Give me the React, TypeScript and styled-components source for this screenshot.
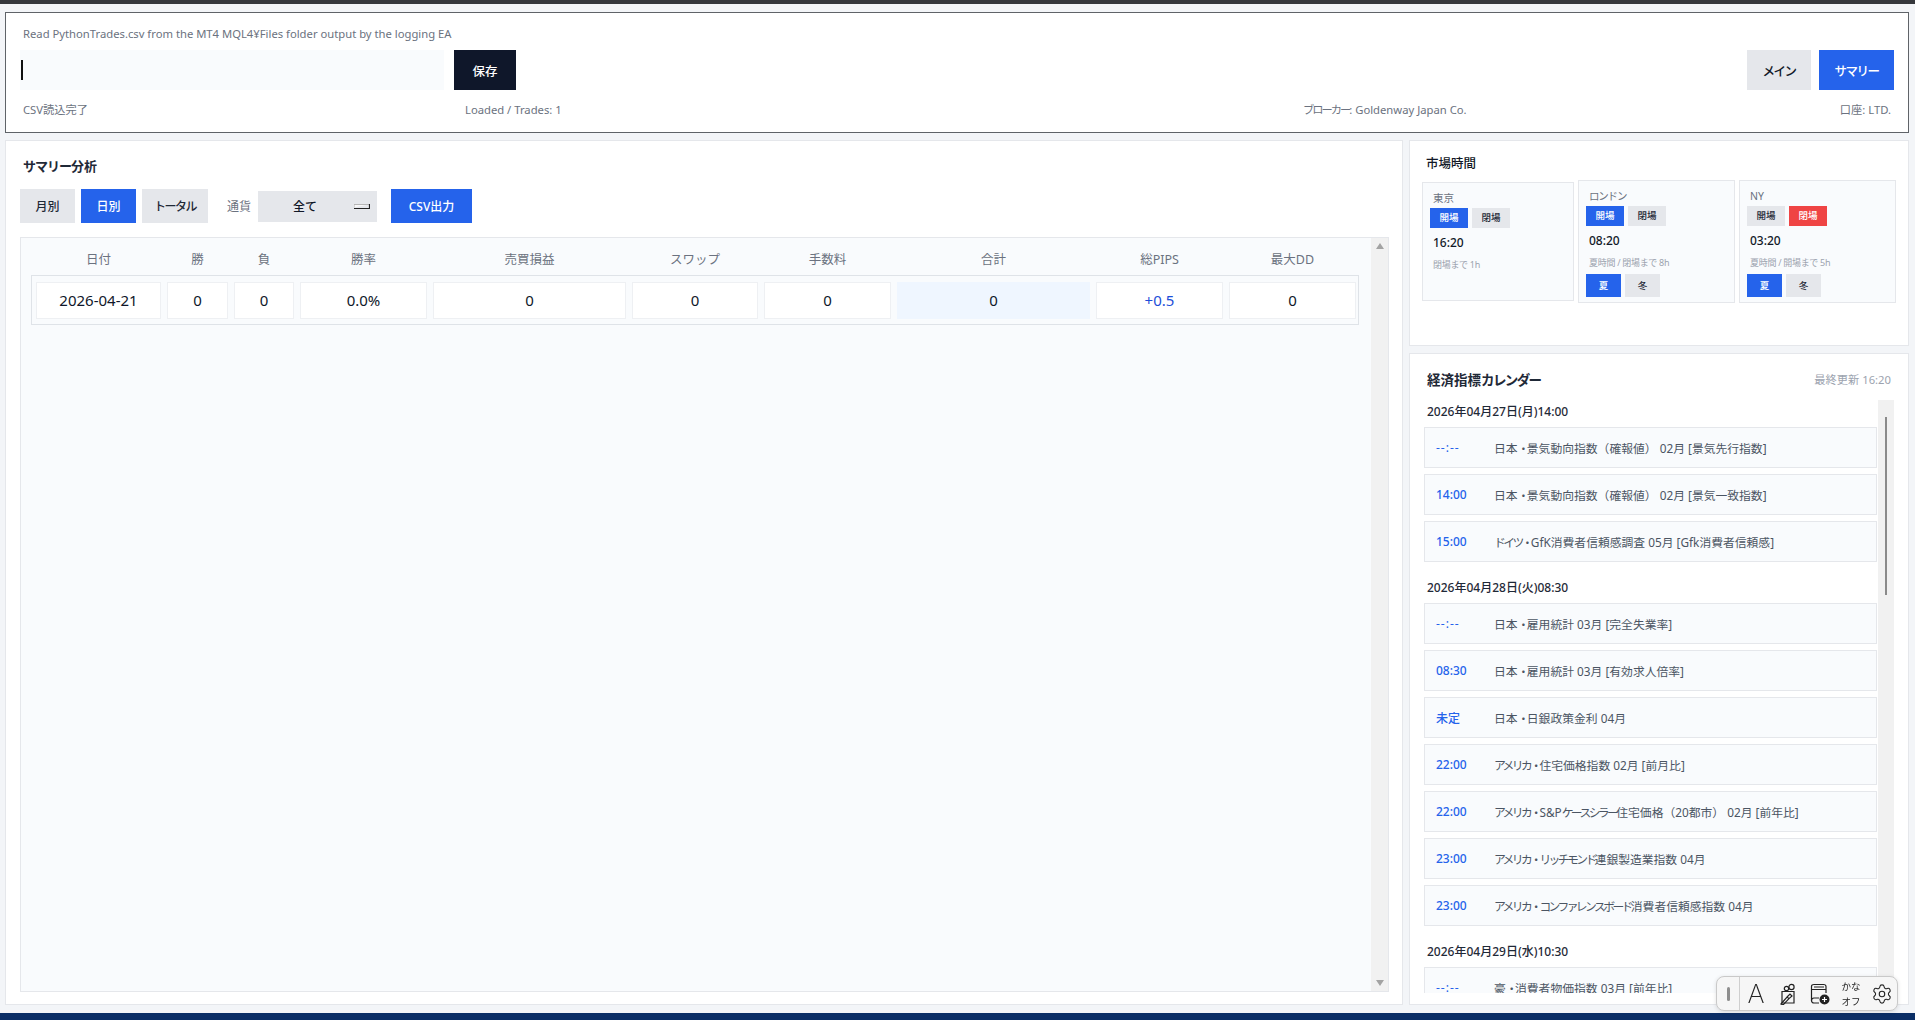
import React from "react";
import styled, { createGlobalStyle } from "styled-components";
import { Settings } from "lucide-react";

const Global = createGlobalStyle`
  * { box-sizing: border-box; }
  html, body { margin: 0; padding: 0; height: 1020px; overflow: hidden; background: #f3f5f8; }
  body {
    font-family: "Noto Sans", "Noto Sans CJK JP", sans-serif;
    font-feature-settings: "pkna";
    color: #111827;
  }
`;

const Page = styled.div`
  display: flex;
  flex-direction: column;
  width: 1915px;
  height: 1020px;
`;
const WindowEdge = styled.div`
  height: 4px;
  flex: none;
  background: #36383c;
`;
const Workspace = styled.div`
  flex: 1;
  display: flex;
  flex-direction: column;
  gap: 7px;
  padding: 8px 6px 8px 5px;
  min-height: 0;
`;
const TaskStrip = styled.div`
  height: 7px;
  flex: none;
  background: #0b2e66;
`;

const Header = styled.header`
  flex: none;
  height: 121px;
  background: #fff;
  border: 1px solid #5f6368;
  padding: 14px 14px 0;
`;
const HeaderNote = styled.div`
  height: 14px;
  line-height: 14px;
  padding-left: 3px;
  font-size: 11.25px;
  color: #6b7280;
`;
const HeaderControls = styled.div`
  display: flex;
  align-items: stretch;
  margin-top: 9px;
  height: 40px;
`;
const PathInput = styled.div`
  width: 424px;
  background: #f9fbfd;
  display: flex;
  align-items: center;
  padding-left: 1px;
`;
const Caret = styled.span`
  width: 2px;
  height: 20px;
  background: #111;
`;
const HeaderButton = styled.button<{ $tone: "dark" | "grey" | "blue"; $w: number; $tight?: boolean }>`
  width: ${(p) => p.$w}px;
  border: 0;
  padding: 0;
  font: inherit;
  font-feature-settings: inherit;
  font-size: 12.5px;
  font-weight: 500;
  letter-spacing: ${(p) => (p.$tight ? "-1.5px" : "0")};
  background: ${(p) => (p.$tone === "dark" ? "#0f172a" : p.$tone === "blue" ? "#2563eb" : "#e5e7eb")};
  color: ${(p) => (p.$tone === "grey" ? "#111827" : "#fff")};
`;
const SaveSlot = styled.div`
  display: flex;
  margin-left: 10px;
`;
const NavGroup = styled.div`
  display: flex;
  gap: 8px;
  margin-left: auto;
`;
const StatusRow = styled.div`
  display: grid;
  grid-template-columns: 442px 838px 1fr auto;
  margin-top: 11px;
  padding: 0 3px;
  height: 18px;
  line-height: 18px;
  font-size: 11.25px;
  color: #6b7280;
`;
const TightKana = styled.span<{ $space?: number }>`
  letter-spacing: ${(p) => p.$space ?? -1.6}px;
`;

const Columns = styled.div`
  flex: 1;
  min-height: 0;
  display: flex;
  gap: 6px;
`;
const SummaryPanel = styled.section`
  flex: 1;
  min-width: 0;
  display: flex;
  flex-direction: column;
  background: #fff;
  border: 1px solid #e5e7eb;
  padding: 16px 13px 12px 14px;
`;
const PanelTitle = styled.h2`
  margin: 0;
  padding-left: 3px;
  height: 18px;
  line-height: 18px;
  font-size: 13px;
  font-weight: 700;
  color: #1f2937;
`;
const Toolbar = styled.div`
  display: flex;
  align-items: center;
  margin-top: 14px;
  height: 34px;
`;
const TabButton = styled.button<{ $active?: boolean; $w: number; $left?: number; $tight?: boolean }>`
  width: ${(p) => p.$w}px;
  height: 34px;
  margin-left: ${(p) => p.$left ?? 0}px;
  border: 0;
  padding: 0;
  font: inherit;
  font-feature-settings: inherit;
  font-size: 12px;
  font-weight: 500;
  letter-spacing: ${(p) => (p.$tight ? "-1.5px" : "0")};
  background: ${(p) => (p.$active ? "#2563eb" : "#e5e7eb")};
  color: ${(p) => (p.$active ? "#fff" : "#1f2937")};
`;
const CurrencyLabel = styled.span`
  margin-left: 19px;
  width: 31px;
  font-size: 12px;
  color: #6b7280;
`;
const CurrencySelect = styled.div`
  position: relative;
  width: 119px;
  height: 31px;
  background: #e5e7eb;
  font-size: 12px;
  font-weight: 500;
  line-height: 31px;
  padding-left: 35px;
  color: #111827;
`;
const SelectArrow = styled.svg`
  position: absolute;
  right: 7px;
  top: 12px;
  width: 16px;
  height: 7px;
`;

const TableFrame = styled.div`
  flex: 1;
  min-height: 0;
  margin-top: 14px;
  display: flex;
  background: #f9fbfd;
  border: 1px solid #e5e7eb;
`;
const TableBody = styled.div`
  flex: 1;
  min-width: 0;
  padding: 7px 12px 0 10px;
`;
const cols = "125px 61px 60px 127px 193px 126px 127px 193px 127px 127px";
const HeadRow = styled.div`
  display: grid;
  grid-template-columns: ${cols};
  column-gap: 6px;
  height: 30px;
  padding: 0 3px 0 5px;
`;
const HeadCell = styled.div`
  text-align: center;
  font-size: 12.5px;
  line-height: 30px;
  color: #6b7280;
`;
const DataRow = styled.div`
  display: grid;
  grid-template-columns: ${cols};
  column-gap: 6px;
  height: 50px;
  padding: 6px 2px 5px 4px;
  border: 1px solid #dfe3e8;
  background: #f9fbfd;
`;
const DataCell = styled.div<{ $tone?: "total" | "blue" }>`
  height: 37px;
  line-height: 35px;
  text-align: center;
  font-size: 15px;
  font-weight: 400;
  border: 1px solid ${(p) => (p.$tone === "total" ? "#eff6ff" : "#eef0f3")};
  background: ${(p) => (p.$tone === "total" ? "#eff6ff" : "#fff")};
  color: ${(p) => (p.$tone === "blue" ? "#1d4ed8" : "#0f172a")};
`;
const TableScroll = styled.div`
  width: 17px;
  flex: none;
  display: flex;
  flex-direction: column;
  justify-content: space-between;
  align-items: center;
  padding: 5px 0;
  background: #f1f1f1;
`;
const ScrollArrow = styled.span<{ $down?: boolean }>`
  width: 0;
  height: 0;
  border-left: 4.5px solid transparent;
  border-right: 4.5px solid transparent;
  ${(p) => (p.$down ? "border-top: 6px solid #a3a3a3;" : "border-bottom: 6px solid #a3a3a3;")}
`;

const SideColumn = styled.div`
  width: 500px;
  flex: none;
  display: flex;
  flex-direction: column;
  gap: 7px;
`;
const MarketPanel = styled.section`
  flex: none;
  height: 206px;
  background: #fff;
  border: 1px solid #e5e7eb;
  padding: 13px 12px 0;
`;
const MarketTitle = styled.h3`
  margin: 1px 0 -1px;
  padding-left: 4px;
  height: 18px;
  line-height: 18px;
  font-size: 12.5px;
  font-weight: 500;
  color: #111827;
`;
const MarketGrid = styled.div`
  display: grid;
  grid-template-columns: 152px 157px 157px;
  gap: 4px;
  align-items: center;
  margin-top: 8px;
`;
const MarketCard = styled.div`
  min-height: 119px;
  background: #f9fbfd;
  border: 1px solid #e5e7eb;
  padding: 8px 7px 5px;
`;
const MarketName = styled.div<{ $tight?: boolean }>`
  padding-left: 3px;
  height: 14px;
  line-height: 14px;
  font-size: 10.5px;
  letter-spacing: ${(p) => (p.$tight ? "-1.2px" : "0")};
  color: #6b7280;
`;
const PillRow = styled.div`
  display: flex;
  gap: 4px;
  margin-top: 3px;
`;
const StatePill = styled.span<{ $tone: "blue" | "grey" | "red" }>`
  width: 38px;
  height: 20px;
  line-height: 20px;
  text-align: center;
  font-size: 9.5px;
  font-weight: 500;
  background: ${(p) => (p.$tone === "blue" ? "#2563eb" : p.$tone === "red" ? "#ef4444" : "#e5e7eb")};
  color: ${(p) => (p.$tone === "grey" ? "#1f2937" : "#fff")};
`;
const MarketTime = styled.div`
  margin-top: 6px;
  padding-left: 3px;
  height: 18px;
  line-height: 18px;
  font-size: 12px;
  font-weight: 500;
  color: #111827;
`;
const MarketNote = styled.div`
  margin-top: 5px;
  padding-left: 3px;
  height: 16px;
  line-height: 16px;
  font-size: 9px;
  letter-spacing: -0.3px;
  color: #9ca3af;
`;
const SeasonRow = styled.div`
  display: flex;
  gap: 4px;
  margin-top: 3px;
`;
const SeasonPill = styled.span<{ $active?: boolean }>`
  width: 35px;
  height: 23px;
  line-height: 23px;
  text-align: center;
  font-size: 9.5px;
  font-weight: 500;
  background: ${(p) => (p.$active ? "#2563eb" : "#e5e7eb")};
  color: ${(p) => (p.$active ? "#fff" : "#1f2937")};
`;

const CalendarPanel = styled.section`
  flex: 1;
  min-height: 0;
  display: flex;
  flex-direction: column;
  background: #fff;
  border: 1px solid #e5e7eb;
  padding: 15px 14px 11px;
`;
const CalendarHead = styled.div`
  display: flex;
  justify-content: space-between;
  align-items: center;
  height: 20px;
  padding: 0 3px;
`;
const CalendarTitle = styled.h3`
  margin: 0;
  font-size: 13.5px;
  font-weight: 700;
  color: #1f2937;
`;
const Updated = styled.span`
  font-size: 11.25px;
  color: #9ca3af;
`;
const CalendarView = styled.div`
  flex: 1;
  min-height: 0;
  margin-top: 11px;
  display: flex;
  gap: 1px;
`;
const CalendarList = styled.div`
  flex: 1;
  min-width: 0;
  overflow: hidden;
  display: flex;
  flex-direction: column;
  gap: 14px;
`;
const DayGroup = styled.div`
  flex: none;
  padding-top: 3px;
`;
const DayHeading = styled.div`
  height: 18px;
  line-height: 18px;
  padding-left: 3px;
  margin-bottom: 6px;
  font-size: 12px;
  font-weight: 500;
  color: #1f2937;
`;
const EventStack = styled.div`
  display: flex;
  flex-direction: column;
  gap: 6px;
`;
const EventRow = styled.div`
  height: 41px;
  display: flex;
  align-items: center;
  padding-left: 11px;
  background: #f9fbfd;
  border: 1px solid #e5e7eb;
`;
const EventTime = styled.span<{ $blank?: boolean }>`
  width: 58px;
  flex: none;
  font-size: 12px;
  font-weight: ${(p) => (p.$blank ? 400 : 500)};
  letter-spacing: ${(p) => (p.$blank ? "1px" : "0")};
  color: #2563eb;
`;
const EventName = styled.span`
  font-size: 11.8px;
  font-weight: 400;
  color: #4b5563;
  white-space: nowrap;
`;
const CalendarScroll = styled.div`
  width: 16px;
  flex: none;
  display: flex;
  justify-content: center;
  background: #f1f1f1;
`;
const CalendarThumb = styled.div`
  width: 2px;
  height: 178px;
  margin-top: 17px;
  background: #8a8a8a;
`;

const ImeBar = styled.div`
  position: fixed;
  left: 1716px;
  top: 976px;
  width: 182px;
  height: 35px;
  display: flex;
  align-items: center;
  background: #f6f6f6;
  border: 1px solid #c9c9c9;
  border-radius: 8px;
  box-shadow: 0 1px 4px rgba(0, 0, 0, 0.12);
  color: #222;
`;
const ImeGrip = styled.div`
  width: 23px;
  height: 100%;
  flex: none;
  display: flex;
  align-items: center;
  justify-content: center;
  border-right: 1px solid #cfcfcf;
  &::before {
    content: "";
    width: 3px;
    height: 14px;
    border-radius: 2px;
    background: #8e8e8e;
  }
`;
const ImeLetter = styled.span`
  width: 32px;
  flex: none;
  text-align: center;
  font-family: Inter, sans-serif;
  font-weight: 200;
  font-size: 26px;
  line-height: 33px;
`;
const ImeIcon = styled.svg`
  width: 32px;
  height: 22px;
  flex: none;
  fill: none;
  stroke: #222;
  stroke-width: 1.2;
`;
const ImeKana = styled.span`
  width: 30px;
  flex: none;
  text-align: center;
  font-size: 9.5px;
  font-weight: 400;
  line-height: 15px;
`;
const GearSlot = styled.span`
  flex: 1;
  display: flex;
  justify-content: center;
`;

const columns = ["日付", "勝", "負", "勝率", "売買損益", "スワップ", "手数料", "合計", "総PIPS", "最大DD"];

const days = [
  {
    date: "2026年04月27日(月)14:00",
    events: [
      ["--:--", "日本・景気動向指数（確報値） 02月 [景気先行指数]"],
      ["14:00", "日本・景気動向指数（確報値） 02月 [景気一致指数]"],
      ["15:00", "ドイツ・GfK消費者信頼感調査 05月 [Gfk消費者信頼感]"],
    ],
  },
  {
    date: "2026年04月28日(火)08:30",
    events: [
      ["--:--", "日本・雇用統計 03月 [完全失業率]"],
      ["08:30", "日本・雇用統計 03月 [有効求人倍率]"],
      ["未定", "日本・日銀政策金利 04月"],
      ["22:00", "アメリカ・住宅価格指数 02月 [前月比]"],
      ["22:00", "アメリカ・S&Pケースシラー住宅価格（20都市） 02月 [前年比]"],
      ["23:00", "アメリカ・リッチモンド連銀製造業指数 04月"],
      ["23:00", "アメリカ・コンファレンスボード消費者信頼感指数 04月"],
    ],
  },
  {
    date: "2026年04月29日(水)10:30",
    events: [["--:--", "豪・消費者物価指数 03月 [前年比]"]],
  },
];

function tightenKana(text: string) {
  return text.split(/([ァ-ヶー・]+)/).map((part, i) =>
    i % 2 === 1 ? (
      <TightKana key={i} $space={-2.6}>
        {part}
      </TightKana>
    ) : (
      part
    ),
  );
}

export default function App() {
  return (
    <Page>
      <Global />
      <WindowEdge />
      <Workspace>
        <Header>
          <HeaderNote>Read PythonTrades.csv from the MT4 MQL4¥Files folder output by the logging EA</HeaderNote>
          <HeaderControls>
            <PathInput>
              <Caret />
            </PathInput>
            <SaveSlot>
              <HeaderButton $tone="dark" $w={62}>保存</HeaderButton>
            </SaveSlot>
            <NavGroup>
              <HeaderButton $tone="grey" $w={64} $tight>メイン</HeaderButton>
              <HeaderButton $tone="blue" $w={75} $tight>サマリー</HeaderButton>
            </NavGroup>
          </HeaderControls>
          <StatusRow>
            <span>CSV読込完了</span>
            <span>Loaded / Trades: 1</span>
            <span><TightKana $space={-2}>ブローカー</TightKana>: Goldenway Japan Co.</span>
            <span>口座: LTD.</span>
          </StatusRow>
        </Header>
        <Columns>
          <SummaryPanel>
            <PanelTitle><TightKana $space={-1}>サマリー</TightKana>分析</PanelTitle>
            <Toolbar>
              <TabButton $w={55}>月別</TabButton>
              <TabButton $w={55} $left={6} $active>日別</TabButton>
              <TabButton $w={66} $left={6} $tight>トータル</TabButton>
              <CurrencyLabel>通貨</CurrencyLabel>
              <CurrencySelect>
                全て
                <SelectArrow viewBox="0 0 16 7">
                  <path d="M0 4.500V1.500H15" fill="#f8f8f8" stroke="#b5b5b5" strokeWidth="1" />
                  <path d="M0 5.500H15.500V1" fill="none" stroke="#222" strokeWidth="1.2" />
                </SelectArrow>
              </CurrencySelect>
              <TabButton $w={81} $left={14} $active>CSV出力</TabButton>
            </Toolbar>
            <TableFrame>
              <TableBody>
                <HeadRow>
                  {columns.map((c) => (
                    <HeadCell key={c}>{c}</HeadCell>
                  ))}
                </HeadRow>
                <DataRow>
                  <DataCell>2026-04-21</DataCell>
                  <DataCell>0</DataCell>
                  <DataCell>0</DataCell>
                  <DataCell>0.0%</DataCell>
                  <DataCell>0</DataCell>
                  <DataCell>0</DataCell>
                  <DataCell>0</DataCell>
                  <DataCell $tone="total">0</DataCell>
                  <DataCell $tone="blue">+0.5</DataCell>
                  <DataCell>0</DataCell>
                </DataRow>
              </TableBody>
              <TableScroll>
                <ScrollArrow />
                <ScrollArrow $down />
              </TableScroll>
            </TableFrame>
          </SummaryPanel>
          <SideColumn>
            <MarketPanel>
              <MarketTitle>市場時間</MarketTitle>
              <MarketGrid>
                <MarketCard>
                  <MarketName>東京</MarketName>
                  <PillRow>
                    <StatePill $tone="blue">開場</StatePill>
                    <StatePill $tone="grey">閉場</StatePill>
                  </PillRow>
                  <MarketTime>16:20</MarketTime>
                  <MarketNote>閉場まで 1h</MarketNote>
                </MarketCard>
                <MarketCard>
                  <MarketName $tight>ロンドン</MarketName>
                  <PillRow>
                    <StatePill $tone="blue">開場</StatePill>
                    <StatePill $tone="grey">閉場</StatePill>
                  </PillRow>
                  <MarketTime>08:20</MarketTime>
                  <MarketNote>夏時間 / 閉場まで 8h</MarketNote>
                  <SeasonRow>
                    <SeasonPill $active>夏</SeasonPill>
                    <SeasonPill>冬</SeasonPill>
                  </SeasonRow>
                </MarketCard>
                <MarketCard>
                  <MarketName>NY</MarketName>
                  <PillRow>
                    <StatePill $tone="grey">開場</StatePill>
                    <StatePill $tone="red">閉場</StatePill>
                  </PillRow>
                  <MarketTime>03:20</MarketTime>
                  <MarketNote>夏時間 / 開場まで 5h</MarketNote>
                  <SeasonRow>
                    <SeasonPill $active>夏</SeasonPill>
                    <SeasonPill>冬</SeasonPill>
                  </SeasonRow>
                </MarketCard>
              </MarketGrid>
            </MarketPanel>
            <CalendarPanel>
              <CalendarHead>
                <CalendarTitle>経済指標<TightKana>カレンダー</TightKana></CalendarTitle>
                <Updated>最終更新 16:20</Updated>
              </CalendarHead>
              <CalendarView>
                <CalendarList>
                  {days.map((d) => (
                    <DayGroup key={d.date}>
                      <DayHeading>{d.date}</DayHeading>
                      <EventStack>
                        {d.events.map(([t, n]) => (
                          <EventRow key={n}>
                            <EventTime $blank={t === "--:--"}>{t}</EventTime>
                            <EventName>{tightenKana(n)}</EventName>
                          </EventRow>
                        ))}
                      </EventStack>
                    </DayGroup>
                  ))}
                </CalendarList>
                <CalendarScroll>
                  <CalendarThumb />
                </CalendarScroll>
              </CalendarView>
            </CalendarPanel>
          </SideColumn>
        </Columns>
      </Workspace>
      <TaskStrip />
      <ImeBar>
        <ImeGrip />
        <ImeLetter>A</ImeLetter>
        <ImeIcon viewBox="0 0 32 22">
          <path d="M10 8.500h12V20H10z" />
          <circle cx="14.500" cy="5.500" r="2.200" />
          <circle cx="19.500" cy="4" r="2.600" />
          <path d="M9 21l6-7 2 1.600-6 6.400zM15 14l3-3 2 2-3 2.600" />
        </ImeIcon>
        <ImeIcon viewBox="0 0 32 22">
          <path d="M10 20c-1.500 0-2.500-1-2.500-2.500V3.500C7.500 2.200 8.500 1.500 10 1.500h9.500c1.500 0 2.500.7 2.500 2V10" />
          <path d="M7.500 17.500c0-1.500 1-2.500 2.500-2.500h5M10 20h5M7.500 6.500H22M10 4h10" />
          <circle cx="20.500" cy="16.500" r="5" fill="#222" stroke="none" />
          <path d="M20.500 14v5M18 16.500h5" stroke="#fff" />
        </ImeIcon>
        <ImeKana>
          かな
          <br />
          オフ
        </ImeKana>
        <GearSlot>
          <Settings size={22} strokeWidth={1.2} />
        </GearSlot>
      </ImeBar>
    </Page>
  );
}
